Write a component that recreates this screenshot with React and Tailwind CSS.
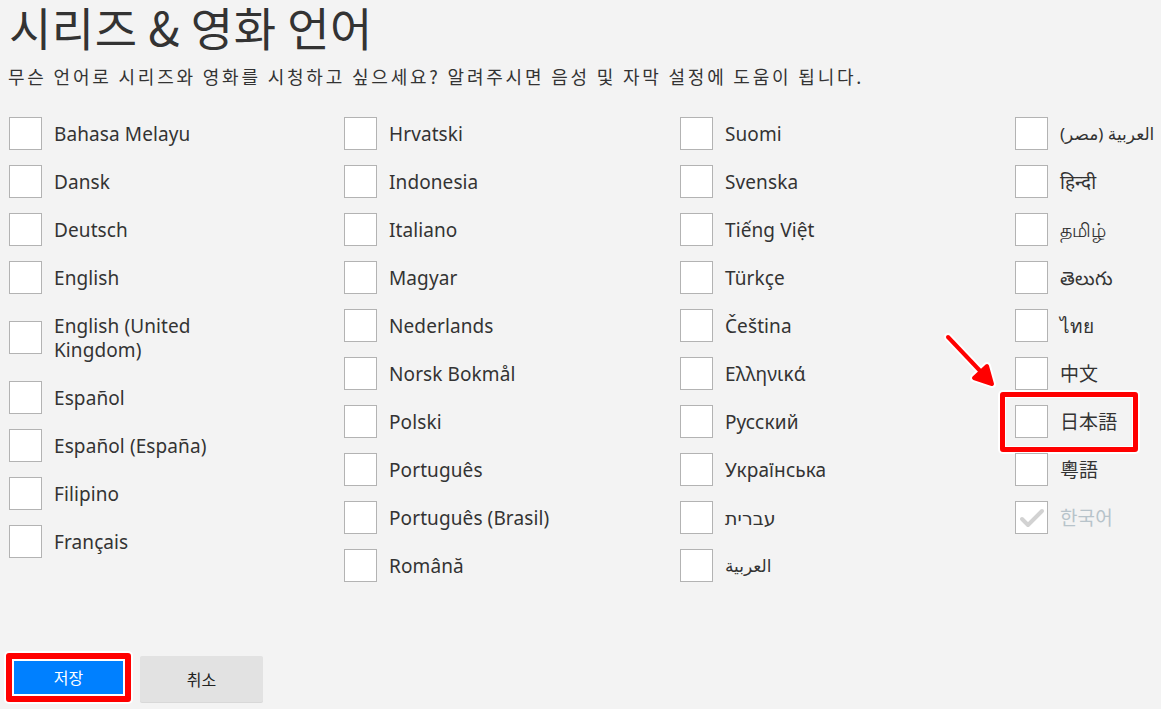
import React from "react";

const columns = [
  ["Bahasa Melayu", "Dansk", "Deutsch", "English", "English (United Kingdom)", "Español", "Español (España)", "Filipino", "Français"],
  ["Hrvatski", "Indonesia", "Italiano", "Magyar", "Nederlands", "Norsk Bokmål", "Polski", "Português", "Português (Brasil)", "Română"],
  ["Suomi", "Svenska", "Tiếng Việt", "Türkçe", "Čeština", "Ελληνικά", "Русский", "Українська", "עברית", "العربية"],
  ["العربية (مصر)", "हिन्दी", "தமிழ்", "తెలుగు", "ไทย", "中文", "日本語", "粵語", "한국어"],
];

const colWidths = ["w-[335px]", "w-[336px]", "w-[335px]", "flex-1"];

function LangItem({ label }) {
  const checked = label === "한국어";
  const marked = label === "日本語";
  const arabic = label.startsWith("العربية");
  return (
    <li className="relative flex items-center mb-[15px]">
      {marked && (
        <div className="absolute left-[-15px] top-[-13px] w-[138px] h-[60px] border-[5px] border-[#f00] rounded-[3px] shadow-[0_0_0_2px_#fff,inset_0_0_0_1px_#fff]" />
      )}
      <span className="relative shrink-0 w-[33px] h-[33px] bg-white border border-[#b3b3b3] flex items-center justify-center">
        {checked && (
          <svg width="26" height="22" viewBox="0 0 26 22">
            <path d="M3 12 L9 18 L23 4" fill="none" stroke="#d2d2d2" strokeWidth="4" strokeLinecap="round" strokeLinejoin="round" />
          </svg>
        )}
      </span>
      <span
        className={
          "relative ml-3 py-[4.5px] leading-6 tracking-[0.1px] max-w-[170px] " +
          (arabic ? "text-[17px] whitespace-nowrap " : "text-[19px] ") +
          (checked ? "text-[#b7c3ca]" : "text-[#333]")
        }
      >
        {label}
      </span>
    </li>
  );
}

export default function App() {
  return (
    <div
      className="relative w-[1161px] h-[709px] overflow-hidden bg-[#f3f3f3] text-[#333]"
      style={{ fontFamily: '"Noto Sans", "Noto Sans CJK KR", "DejaVu Sans", sans-serif' }}
    >
      <h1
        className="-mt-[3px] pl-[9px] text-[46px] leading-[58px] tracking-[0.5px] font-normal text-[#333]"
        style={{ fontFamily: '"Noto Sans CJK KR", sans-serif' }}
      >
        시리즈 &amp; 영화 언어
      </h1>
      <p
        className="mt-[9px] pl-[8px] text-[18px] leading-6 tracking-[2.8px] whitespace-nowrap text-[#333]"
        style={{ fontFamily: '"Noto Sans CJK KR", sans-serif' }}
      >
        무슨 언어로 시리즈와 영화를 시청하고 싶으세요? 알려주시면 음성 및 자막 설정에 도움이 됩니다.
      </p>

      <div className="mt-[29px] pl-[9px] flex">
        {columns.map((col, i) => (
          <ul key={i} className={colWidths[i]}>
            {col.map((l) => (
              <LangItem key={l} label={l} />
            ))}
          </ul>
        ))}
      </div>

      {/* annotation arrow */}
      <svg className="absolute left-[936px] top-[326px]" width="66" height="66" viewBox="0 0 66 66">
        <g stroke="#fff" strokeWidth="8" strokeLinecap="round" fill="#fff" strokeLinejoin="round">
          <line x1="12" y1="11" x2="48" y2="49" />
          <polygon points="56,58 38,52 51,40" />
        </g>
        <g stroke="#f00" strokeWidth="4" strokeLinecap="round" fill="#f00" strokeLinejoin="round">
          <line x1="12" y1="11" x2="48" y2="49" />
          <polygon points="56,58 38,52 51,40" />
        </g>
      </svg>

      <div className="absolute left-[6px] top-[653px] flex items-start" style={{ fontFamily: '"Noto Sans CJK KR", sans-serif' }}>
        <div className="border-[6px] border-[#f00] rounded-[3px] p-[2px] bg-white shadow-[0_0_0_2px_#fff]">
          <button className="w-[109px] h-[33px] bg-[#0080ff] text-white text-[16px] leading-[33px]">
            저장
          </button>
        </div>
        <button className="ml-[9px] mt-[3px] w-[123px] h-[46px] bg-[#e2e2e2] rounded-[2px] text-[#222] text-[16px] shadow-[0_1px_0_#d8d8d8]">
          취소
        </button>
      </div>
    </div>
  );
}
